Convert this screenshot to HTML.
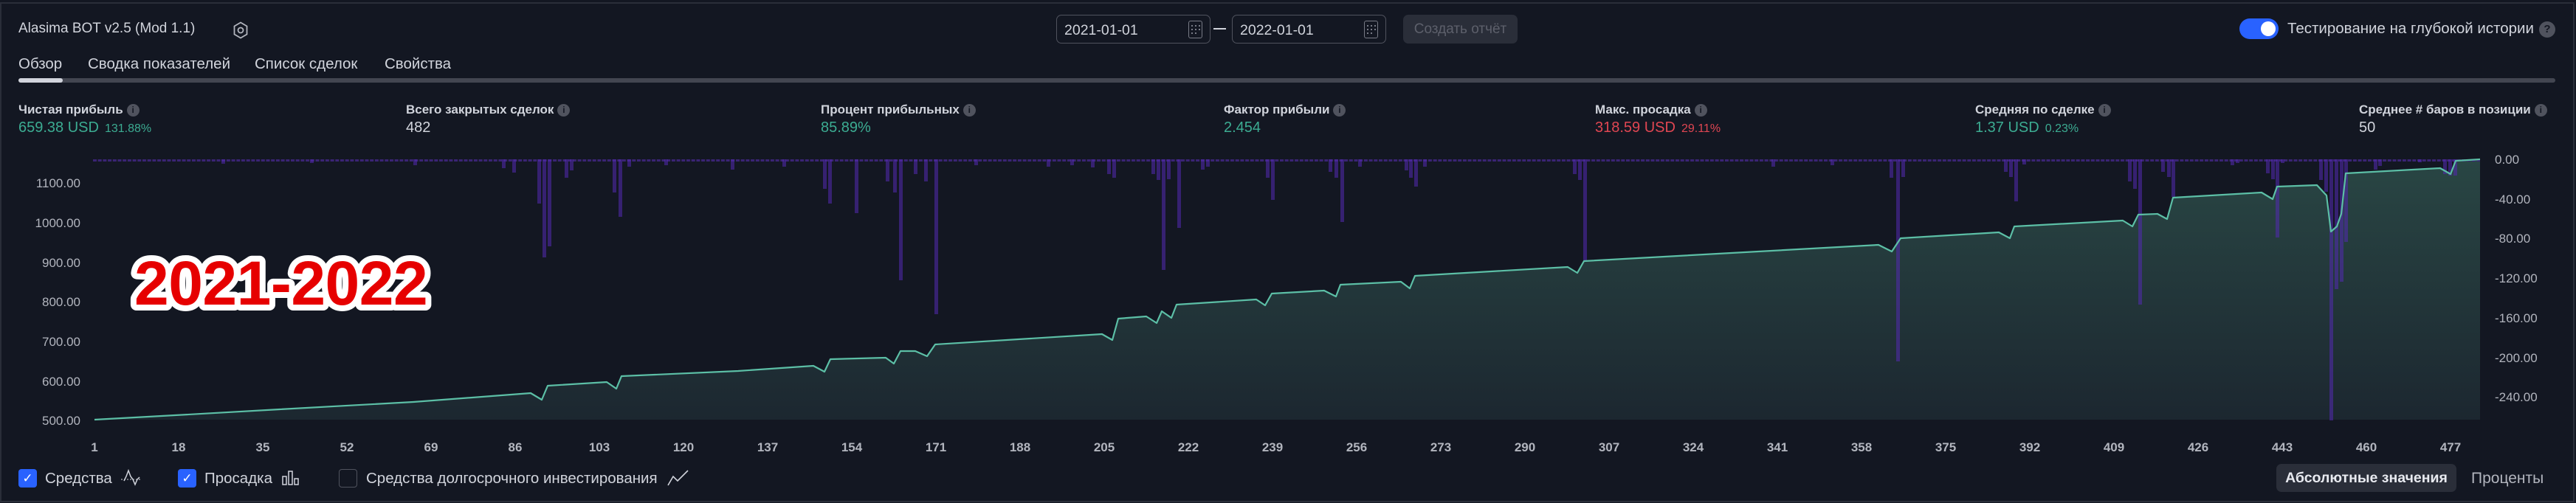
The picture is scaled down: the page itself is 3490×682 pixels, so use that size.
<!DOCTYPE html>
<html><head><meta charset="utf-8">
<style>
*{margin:0;padding:0;box-sizing:border-box}
html,body{width:3490px;height:682px;overflow:hidden;background:#131722}
body{font-family:"Liberation Sans","DejaVu Sans",sans-serif;color:#d1d4dc;position:relative}
.frame{position:absolute;left:0;top:3px;width:3488px;height:678px;border:2px solid #2a2e39}
.a{position:absolute;white-space:nowrap}
.title{left:25px;top:28px;font-size:19px;color:#d1d4dc}
.tab{top:75px;font-size:20.5px;color:#d1d4dc}
.bar{left:25px;top:106px;width:3437px;height:6px;background:#434651;border-radius:3px}
.bar i{position:absolute;left:0;top:0;width:60px;height:6px;background:#d1d4dc;border-radius:3px}
.lbl{top:139px;font-size:17px;font-weight:bold;color:#d1d4dc}
.val{top:162px;font-size:20px}
.pct{font-size:16px;margin-left:8px}
.info{display:inline-block;width:17px;height:17px;border-radius:50%;background:#50535e;color:#131722;font-size:12px;font-weight:bold;text-align:center;line-height:17px;margin-left:5px;vertical-align:1px}
.g{color:#3cac92}.r{color:#e04652}
.inp{top:20px;height:39px;width:209px;border:1px solid #50535e;border-radius:7px;font-size:19.5px;color:#d1d4dc;padding:9px 0 0 10px}
.cal{position:absolute;right:10px;top:7px;width:19px;height:24px;border:1.5px solid #787b86;border-radius:3px}
.cal::before{content:"";position:absolute;left:3px;top:5px;width:2px;height:2px;background:#787b86;box-shadow:5px 0 #787b86,10px 0 #787b86,0 5px #787b86,5px 5px #787b86,10px 5px #787b86,0 10px #787b86,5px 10px #787b86}
.btn{left:1901px;top:20px;width:155px;height:39px;background:#2a2e39;border-radius:7px;color:#5d606b;font-size:19px;text-align:center;line-height:39px}
.tog{left:3034px;top:25px;width:53px;height:28px;border-radius:14px;background:#2962ff}
.tog i{position:absolute;right:4px;top:4px;width:20px;height:20px;border-radius:50%;background:#fff}
.cb{top:636px;width:25px;height:25px;border-radius:4px;background:#2962ff;color:#fff;font-size:17px;text-align:center;line-height:25px}
.leg{top:637px;font-size:20.5px;color:#d1d4dc}
</style></head><body>
<div class="frame"></div>
<div class="a title">Alasima BOT v2.5 (Mod 1.1)</div>
<svg class="a" style="left:315px;top:29px" width="22" height="24" viewBox="0 0 22 24"><polygon points="11,1.5 19.5,6.5 19.5,17.5 11,22.5 2.5,17.5 2.5,6.5" fill="none" stroke="#b2b5be" stroke-width="1.8"/><circle cx="11" cy="12" r="3.5" fill="none" stroke="#b2b5be" stroke-width="1.8"/></svg>
<div class="a tab" style="left:25px">Обзор</div>
<div class="a tab" style="left:119px">Сводка показателей</div>
<div class="a tab" style="left:345px">Список сделок</div>
<div class="a tab" style="left:521px">Свойства</div>
<div class="a bar"><i></i></div>

<div class="a inp" style="left:1431px">2021-01-01<span class="cal"></span></div>
<div class="a" style="left:1644px;top:38px;width:17px;height:2px;background:#d1d4dc"></div>
<div class="a inp" style="left:1669px">2022-01-01<span class="cal"></span></div>
<div class="a btn">Создать отчёт</div>
<div class="a tog"><i></i></div>
<div class="a" style="left:3099px;top:27px;font-size:20.5px;color:#d1d4dc">Тестирование на глубокой истории</div>
<div class="a" style="left:3440px;top:29px;width:22px;height:22px;border-radius:50%;background:#50535e;color:#131722;font-weight:bold;font-size:15px;text-align:center;line-height:22px">?</div>

<div class="a lbl" style="left:25px">Чистая прибыль<span class="info">i</span></div>
<div class="a val g" style="left:25px">659.38 USD<span class="pct">131.88%</span></div>
<div class="a lbl" style="left:550px">Всего закрытых сделок<span class="info">i</span></div>
<div class="a val" style="left:550px">482</div>
<div class="a lbl" style="left:1112px">Процент прибыльных<span class="info">i</span></div>
<div class="a val g" style="left:1112px">85.89%</div>
<div class="a lbl" style="left:1658px">Фактор прибыли<span class="info">i</span></div>
<div class="a val g" style="left:1658px">2.454</div>
<div class="a lbl" style="left:2161px">Макс. просадка<span class="info">i</span></div>
<div class="a val r" style="left:2161px">318.59 USD<span class="pct">29.11%</span></div>
<div class="a lbl" style="left:2676px">Средняя по сделке<span class="info">i</span></div>
<div class="a val g" style="left:2676px">1.37 USD<span class="pct">0.23%</span></div>
<div class="a lbl" style="left:3196px">Среднее # баров в позиции<span class="info">i</span></div>
<div class="a val" style="left:3196px">50</div>

<svg class="a" style="left:0;top:0" width="3490" height="682" viewBox="0 0 3490 682">
<defs>
<linearGradient id="gf" x1="0" y1="0" x2="0" y2="1"><stop offset="0" stop-color="#294644"/><stop offset="1" stop-color="#1c2730"/></linearGradient>
<pattern id="pb" x="126" y="0" width="6.7" height="682" patternUnits="userSpaceOnUse"><rect x="0" y="216" width="5" height="3" fill="#3a2474"/></pattern>
</defs>
<polygon fill="url(#gf)" points="128,569 237,563 379,555 560,545 719,533 734,542 742,523 822,518 835,527 842,510 1000,503 1102,496 1117,504 1125,487 1200,485 1211,493 1220,476 1240,476 1256,483 1267,467 1493,453 1507,461 1515,432 1553,429 1567,438 1574,422 1587,431 1594,413 1702,406 1714,414 1723,398 1794,394 1810,402 1816,386 1898,382 1910,391 1917,374 2124,362 2137,370 2146,354 2545,332 2563,341 2575,323 2708,315 2723,323 2729,307 2876,299 2889,307 2897,291 2923,290 2936,297 2944,268 3064,261 3079,270 3085,253 3139,251 3152,265 3158,314 3166,307 3172,290 3178,235 3306,228 3320,236 3327,218 3360,216 3360,569"/>
<rect x="126" y="216" width="3234" height="3" fill="url(#pb)"/>
<g fill="rgba(84,42,178,0.55)">
<rect x="300" y="216" width="5" height="6"/><rect x="420" y="216" width="5" height="5"/><rect x="560" y="216" width="5" height="8"/><rect x="680" y="216" width="5" height="12"/><rect x="694" y="216" width="5" height="18"/>
<rect x="728" y="216" width="5" height="60"/><rect x="735" y="216" width="5" height="133"/><rect x="742" y="216" width="5" height="118"/><rect x="765" y="216" width="5" height="25"/><rect x="772" y="216" width="5" height="15"/>
<rect x="830" y="216" width="5" height="45"/><rect x="838" y="216" width="5" height="78"/><rect x="850" y="216" width="5" height="10"/><rect x="900" y="216" width="5" height="8"/>
<rect x="990" y="216" width="5" height="14"/><rect x="1060" y="216" width="5" height="10"/><rect x="1115" y="216" width="5" height="40"/><rect x="1122" y="216" width="5" height="60"/>
<rect x="1158" y="216" width="5" height="73"/><rect x="1200" y="216" width="5" height="30"/><rect x="1210" y="216" width="5" height="45"/><rect x="1218" y="216" width="5" height="164"/><rect x="1238" y="216" width="5" height="20"/><rect x="1252" y="216" width="5" height="30"/><rect x="1266" y="216" width="5" height="210"/>
<rect x="1320" y="216" width="5" height="8"/><rect x="1418" y="216" width="5" height="10"/><rect x="1450" y="216" width="5" height="8"/><rect x="1478" y="216" width="5" height="11"/>
<rect x="1500" y="216" width="5" height="20"/><rect x="1507" y="216" width="5" height="25"/><rect x="1560" y="216" width="5" height="20"/><rect x="1567" y="216" width="5" height="28"/><rect x="1574" y="216" width="5" height="150"/><rect x="1581" y="216" width="5" height="27"/><rect x="1595" y="216" width="5" height="93"/>
<rect x="1627" y="216" width="5" height="14"/><rect x="1634" y="216" width="5" height="10"/><rect x="1715" y="216" width="5" height="25"/><rect x="1722" y="216" width="5" height="55"/>
<rect x="1800" y="216" width="5" height="17"/><rect x="1808" y="216" width="5" height="25"/><rect x="1816" y="216" width="5" height="85"/><rect x="1840" y="216" width="5" height="10"/>
<rect x="1903" y="216" width="5" height="15"/><rect x="1909" y="216" width="5" height="25"/><rect x="1916" y="216" width="5" height="37"/><rect x="1928" y="216" width="5" height="10"/>
<rect x="2131" y="216" width="5" height="20"/><rect x="2138" y="216" width="5" height="28"/><rect x="2145" y="216" width="5" height="137"/>
<rect x="2400" y="216" width="5" height="10"/><rect x="2480" y="216" width="5" height="8"/><rect x="2560" y="216" width="5" height="25"/><rect x="2569" y="216" width="5" height="274"/><rect x="2576" y="216" width="5" height="24"/>
<rect x="2715" y="216" width="5" height="17"/><rect x="2722" y="216" width="5" height="24"/><rect x="2729" y="216" width="5" height="57"/><rect x="2740" y="216" width="5" height="7"/>
<rect x="2883" y="216" width="5" height="30"/><rect x="2890" y="216" width="5" height="40"/><rect x="2897" y="216" width="5" height="197"/>
<rect x="2928" y="216" width="5" height="17"/><rect x="2936" y="216" width="5" height="24"/><rect x="2942" y="216" width="5" height="51"/>
<rect x="3022" y="216" width="5" height="8"/><rect x="3029" y="216" width="5" height="5"/>
<rect x="3070" y="216" width="5" height="19"/><rect x="3077" y="216" width="5" height="27"/><rect x="3083" y="216" width="5" height="106"/><rect x="3090" y="216" width="5" height="5"/>
<rect x="3142" y="216" width="5" height="28"/><rect x="3149" y="216" width="5" height="44"/><rect x="3156" y="216" width="5" height="354"/><rect x="3163" y="216" width="5" height="176"/><rect x="3170" y="216" width="5" height="166"/><rect x="3176" y="216" width="5" height="112"/>
<rect x="3216" y="216" width="5" height="14"/><rect x="3222" y="216" width="5" height="9"/><rect x="3276" y="216" width="5" height="4"/>
<rect x="3310" y="216" width="5" height="20"/><rect x="3317" y="216" width="5" height="22"/><rect x="3324" y="216" width="5" height="22"/>
</g>
<polyline fill="none" stroke="#5cbfa6" stroke-width="2.2" stroke-linejoin="round" points="128,569 237,563 379,555 560,545 719,533 734,542 742,523 822,518 835,527 842,510 1000,503 1102,496 1117,504 1125,487 1200,485 1211,493 1220,476 1240,476 1256,483 1267,467 1493,453 1507,461 1515,432 1553,429 1567,438 1574,422 1587,431 1594,413 1702,406 1714,414 1723,398 1794,394 1810,402 1816,386 1898,382 1910,391 1917,374 2124,362 2137,370 2146,354 2545,332 2563,341 2575,323 2708,315 2723,323 2729,307 2876,299 2889,307 2897,291 2923,290 2936,297 2944,268 3064,261 3079,270 3085,253 3139,251 3152,265 3158,314 3166,307 3172,290 3178,235 3306,228 3320,236 3327,218 3360,216"/>
<g font-family="Liberation Sans, sans-serif" font-size="17" fill="#b2b5be" text-anchor="end">
<text x="109" y="254">1100.00</text><text x="109" y="308">1000.00</text><text x="109" y="362">900.00</text><text x="109" y="415">800.00</text><text x="109" y="469">700.00</text><text x="109" y="523">600.00</text><text x="109" y="576">500.00</text>
</g>
<g font-family="Liberation Sans, sans-serif" font-size="17" fill="#b2b5be">
<text x="3380" y="222">0.00</text><text x="3380" y="276">-40.00</text><text x="3380" y="329">-80.00</text><text x="3380" y="383">-120.00</text><text x="3380" y="437">-160.00</text><text x="3380" y="491">-200.00</text><text x="3380" y="544">-240.00</text>
</g>
<g font-family="Liberation Sans, sans-serif" font-size="17" font-weight="bold" fill="#b2b5be" text-anchor="middle">
<text x="128" y="612">1</text><text x="242" y="612">18</text><text x="356" y="612">35</text><text x="470" y="612">52</text><text x="584" y="612">69</text><text x="698" y="612">86</text><text x="812" y="612">103</text><text x="926" y="612">120</text><text x="1040" y="612">137</text><text x="1154" y="612">154</text><text x="1268" y="612">171</text><text x="1382" y="612">188</text><text x="1496" y="612">205</text><text x="1610" y="612">222</text><text x="1724" y="612">239</text><text x="1838" y="612">256</text><text x="1952" y="612">273</text><text x="2066" y="612">290</text><text x="2180" y="612">307</text><text x="2294" y="612">324</text><text x="2408" y="612">341</text><text x="2522" y="612">358</text><text x="2636" y="612">375</text><text x="2750" y="612">392</text><text x="2864" y="612">409</text><text x="2978" y="612">426</text><text x="3092" y="612">443</text><text x="3206" y="612">460</text><text x="3320" y="612">477</text>
</g>
<text x="182" y="413" font-family="Liberation Sans, sans-serif" font-size="84" font-weight="bold" fill="#e60000" stroke="#ffffff" stroke-width="16" stroke-linejoin="round" paint-order="stroke" letter-spacing="-0.5">2021-2022</text>
</svg>

<div class="a cb" style="left:25px">✓</div>
<div class="a leg" style="left:61px">Средства</div>
<svg class="a" style="left:163px;top:636px" width="30" height="24" viewBox="0 0 30 24"><path d="M1 14h28" stroke="#d1d4dc" stroke-width="1" stroke-dasharray="2 2"/><path d="M5 16l3-6 3-8 3 8 3 4 3 7 3-7 3-3" fill="none" stroke="#d1d4dc" stroke-width="1.5"/></svg>
<div class="a cb" style="left:241px">✓</div>
<div class="a leg" style="left:277px">Просадка</div>
<svg class="a" style="left:381px;top:637px" width="26" height="22" viewBox="0 0 26 22"><rect x="2" y="9" width="5" height="11" fill="none" stroke="#d1d4dc" stroke-width="1.5"/><rect x="10" y="2" width="5" height="18" fill="none" stroke="#d1d4dc" stroke-width="1.5"/><rect x="18" y="12" width="5" height="8" fill="none" stroke="#d1d4dc" stroke-width="1.5"/></svg>
<div class="a cb" style="left:459px;background:transparent;border:1.5px solid #50535e"></div>
<div class="a leg" style="left:496px">Средства долгосрочного инвестирования</div>
<svg class="a" style="left:903px;top:636px" width="32" height="24" viewBox="0 0 32 24"><path d="M2 22l7-12 6 6 14-14" fill="none" stroke="#d1d4dc" stroke-width="1.6"/></svg>

<div class="a" style="left:3084px;top:629px;width:244px;height:38px;background:#2a2e39;border-radius:7px;font-size:19.5px;font-weight:bold;color:#e8eaf0;text-align:center;line-height:38px">Абсолютные значения</div>
<div class="a" style="left:3348px;top:637px;font-size:21px;color:#b2b5be">Проценты</div>
</body></html>
